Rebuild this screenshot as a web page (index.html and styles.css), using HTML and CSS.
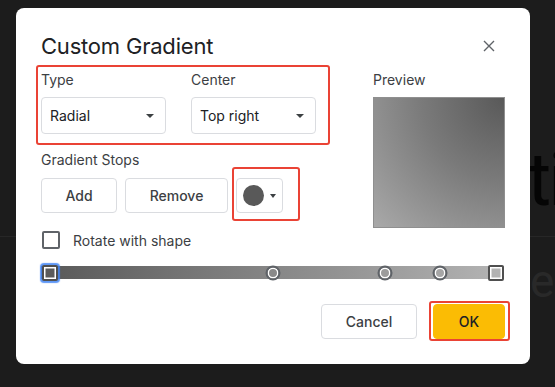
FILE: index.html
```html
<!DOCTYPE html>
<html lang="en">
<head>
    <meta charset="UTF-8">
    <meta name="viewport" content="width=device-width, initial-scale=1.0">
    <title>Custom Gradient</title>

    <link rel="stylesheet" href="styles.css">
</head>
<body>
    <div class="backdrop">
        <div class="backdrop-rule"></div>
        <span class="backdrop-word big">ti</span>
        <span class="backdrop-word small">e</span>
    </div>

    <div class="dialog">
        <div class="dialog-header">
            <h2 class="dialog-title">Custom Gradient</h2>
            <button class="close-button" aria-label="Close">
                <svg width="12" height="12" viewBox="0 0 12 12">
                    <path d="M1 1 L11 11 M11 1 L1 11" stroke="#5f6368" stroke-width="1.4" fill="none"/>
                </svg>
            </button>
        </div>

        <div class="dialog-body">
            <div class="settings">
                <div class="fields marked marked-fields">
                    <div class="field">
                        <div class="field-label">Type</div>
                        <div class="select">
                            <span>Radial</span>
                            <span class="caret"></span>
                        </div>
                    </div>
                    <div class="field">
                        <div class="field-label">Center</div>
                        <div class="select">
                            <span>Top right</span>
                            <span class="caret"></span>
                        </div>
                    </div>
                </div>

                <div class="section-label">Gradient Stops</div>
                <div class="stop-buttons">
                    <button class="btn btn-add">Add</button>
                    <button class="btn btn-remove">Remove</button>
                    <button class="btn color-button marked marked-color">
                        <span class="swatch"></span>
                        <span class="caret small-caret"></span>
                    </button>
                </div>

                <label class="checkbox-row">
                    <span class="checkbox"></span>
                    Rotate with shape
                </label>
            </div>

            <div class="preview">
                <div class="field-label">Preview</div>
                <div class="preview-box"></div>
            </div>
        </div>

        <div class="stops-track">
            <span class="stop square selected" style="--pos: 0; --fill: #5b5b5b"></span>
            <span class="stop circle" style="--pos: 0.5; --fill: #8a8a8a"></span>
            <span class="stop circle" style="--pos: 0.75; --fill: #9c9c9c"></span>
            <span class="stop circle" style="--pos: 0.875; --fill: #a6a6a6"></span>
            <span class="stop square" style="--pos: 1; --fill: #b3b3b3"></span>
        </div>

        <div class="dialog-footer">
            <button class="btn btn-cancel">Cancel</button>
            <button class="btn btn-ok marked marked-ok">OK</button>
        </div>
    </div>
</body>
</html>
```

FILE: styles.css
```css
* {
    box-sizing: border-box;
}

body {
    font-family: Inter, Roboto, "Liberation Sans", Arial, sans-serif;
    background-color: #1c1c1c;
    margin: 0;
    width: 555px;
    height: 387px;
    overflow: hidden;
    position: relative;
    padding: 8px 0 0 16px;
}

/* page behind the modal */
.backdrop {
    position: absolute;
    top: 0;
    left: 0;
    right: 0;
    bottom: 0;
}

.backdrop-rule {
    position: absolute;
    top: 236px;
    left: 0;
    right: 0;
    height: 1px;
    background-color: #272727;
}

.backdrop-word {
    position: absolute;
    line-height: 1;
    font-family: Roboto, sans-serif;
}

.backdrop-word.big {
    left: 527px;
    top: 143px;
    font-size: 74px;
    letter-spacing: -3px;
    color: #050505;
}

.backdrop-word.small {
    left: 530px;
    top: 258px;
    font-size: 46px;
    color: #292929;
}

.dialog {
    position: relative;
    width: 514px;
    height: 356px;
    background-color: #fff;
    border-radius: 8px;
    padding: 24px 25px 25px 25px;
    color: #3c4043;
    font-size: 14px;
}

.dialog-header {
    display: flex;
    align-items: center;
    justify-content: space-between;
    height: 28px;
}

.dialog-title {
    margin: 0;
    font-size: 22px;
    line-height: 28px;
    font-weight: 400;
    color: #202124;
    letter-spacing: -0.2px;
}

.close-button {
    width: 20px;
    height: 20px;
    margin-right: 6px;
    padding: 0;
    border: none;
    background: transparent;
    display: flex;
    align-items: center;
    justify-content: center;
}

.dialog-body {
    margin-top: 10px;
    display: grid;
    grid-template-columns: 275px 132px;
    column-gap: 57px;
    align-items: start;
}

/* red annotation frames */
.marked {
    position: relative;
}

.marked::after {
    content: "";
    position: absolute;
    border: 2px solid #ea4335;
    border-radius: 3px;
    pointer-events: none;
}

.marked-fields::after {
    top: -5px;
    left: -5px;
    right: -14px;
    bottom: -11px;
}

.marked-color::after {
    top: -12px;
    left: -5px;
    right: -18px;
    bottom: -9px;
}

.marked-ok::after {
    top: -4px;
    left: -5px;
    right: -6px;
    bottom: -3px;
}

.fields {
    display: flex;
    gap: 25px;
}

.field {
    width: 125px;
}

.field-label,
.section-label {
    line-height: 20px;
    color: #3c4043;
}

.field-label {
    margin-bottom: 7px;
}

.select {
    height: 37px;
    border: 1px solid #dadce0;
    border-radius: 4px;
    display: flex;
    align-items: center;
    justify-content: space-between;
    padding: 0 11px 0 8px;
    color: #202124;
}

.caret {
    width: 0;
    height: 0;
    border-left: 4px solid transparent;
    border-right: 4px solid transparent;
    border-top: 4px solid #3c4043;
}

.small-caret {
    border-left-width: 3.5px;
    border-right-width: 3.5px;
}

.section-label {
    margin-top: 16px;
}

.stop-buttons {
    margin-top: 8px;
    display: flex;
    gap: 8px;
}

.btn {
    height: 35px;
    border: 1px solid #dadce0;
    border-radius: 4px;
    background-color: #fff;
    font-family: Inter, Roboto, "Liberation Sans", Arial, sans-serif;
    font-size: 14px;
    font-weight: 500;
    color: #3c4043;
    padding: 0;
    cursor: pointer;
}

.btn-add {
    width: 76px;
}

.btn-remove {
    width: 103px;
}

.color-button {
    width: 47px;
    display: flex;
    align-items: center;
    gap: 6px;
    padding-left: 6px;
}

.swatch {
    width: 21px;
    height: 21px;
    border-radius: 50%;
    background-color: #595959;
}

.checkbox-row {
    margin-top: 17px;
    height: 20px;
    display: flex;
    align-items: center;
    gap: 13px;
    color: #3c4043;
}

.checkbox {
    width: 18px;
    height: 18px;
    margin-left: 1px;
    border: 2px solid #5f6368;
    border-radius: 2px;
}

.preview-box {
    width: 132px;
    height: 131px;
    border: 1px solid #8f8f8f;
    background: radial-gradient(circle at top right, #595959 0%, #7a7a7a 45%, #a9a9a9 100%);
}

.stops-track {
    position: relative;
    margin-top: 16px;
    margin-right: 1px;
    height: 13px;
    background: linear-gradient(to right, #585858, #b4b4b4);
}

.stop {
    position: absolute;
    top: 50%;
    left: calc(9px + var(--pos) * (100% - 17px));
    transform: translate(-50%, -50%);
    background-color: var(--fill);
}

.stop.circle {
    width: 15px;
    height: 15px;
    border-radius: 50%;
    border: 2px solid #5f6368;
    box-shadow: inset 0 0 0 1.5px #fff;
}

.stop.square {
    width: 16px;
    height: 16px;
    border-radius: 2px;
    border: 2px solid #4f4f4f;
    box-shadow: inset 0 0 0 1.5px #fff;
}

.stop.selected {
    box-shadow: inset 0 0 0 1.5px #fff, 0 0 1px 2px rgba(66, 133, 244, 0.85);
}

.dialog-footer {
    margin-top: 25px;
    display: flex;
    justify-content: flex-end;
    gap: 16px;
}

.btn-cancel {
    width: 96px;
}

.btn-ok {
    width: 72px;
    border-color: #fbbc04;
    background-color: #fbbc04;
    color: #202124;
}
```
